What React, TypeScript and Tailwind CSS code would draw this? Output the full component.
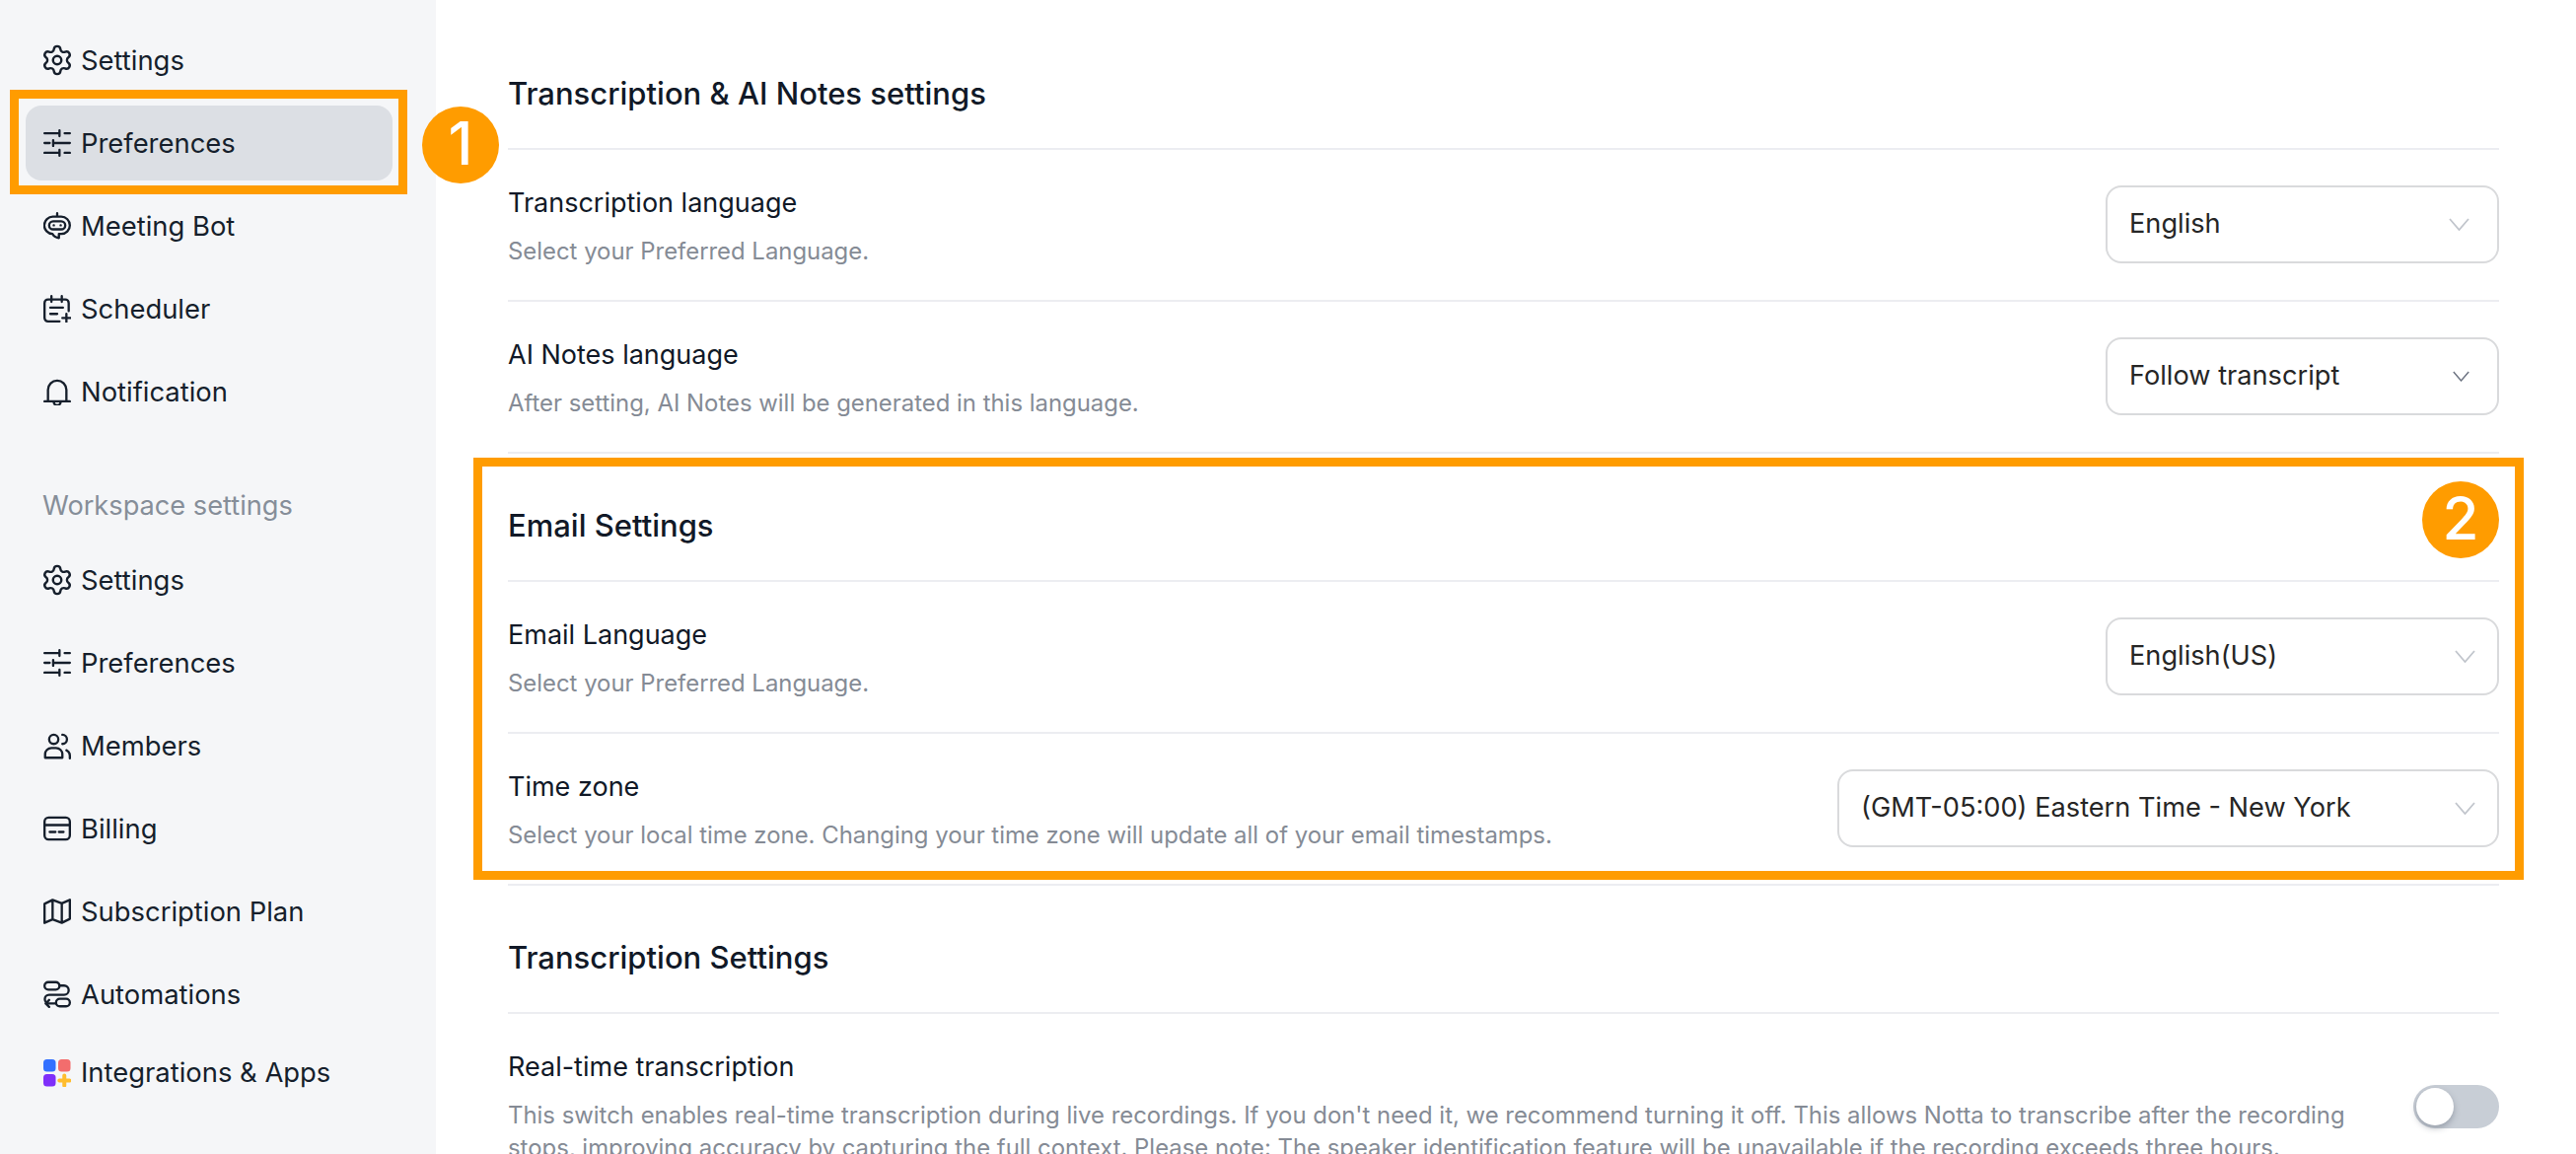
import type { ReactNode } from "react";
import { Settings } from "lucide-react";

function Icon({ children }: { children: ReactNode }) {
  return (
    <svg
      viewBox="0 0 24 24"
      className="h-[28px] w-[28px] shrink-0 text-[#161f2c]"
      fill="none"
      stroke="currentColor"
      strokeWidth="2"
      strokeLinecap="round"
      strokeLinejoin="round"
    >
      {children}
    </svg>
  );
}

const GearIcon = () => (
  <div className="flex h-[28px] w-[28px] shrink-0 items-center justify-center text-[#161f2c]">
    <Settings className="h-[34px] w-[34px] shrink-0" strokeWidth={1.7} />
  </div>
);

const SlidersIcon = () => (
  <Icon>
    <path d="M1 3.5h13M14 1v5M18.5 3.5H23M1 12h4.5M8.5 9.5v5M8.5 12H23M1 20.5h13M14 18v5M18.5 20.5H23" />
  </Icon>
);

const BotIcon = () => (
  <Icon>
    <path d="M12 1v3M8.5 4h7a7.5 7.5 0 0 1 0 15H13.5v3.5C11 22 9 21 8 19a7.5 7.5 0 0 1 .5-15z" />
    <rect x="5" y="8" width="14" height="7" rx="3.5" />
    <path d="M9 11.5h.1M15 11.5h.1" />
  </Icon>
);

const CalendarPlusIcon = () => (
  <Icon>
    <path d="M22 14V7a3 3 0 0 0-3-3H4a3 3 0 0 0-3 3v13a3 3 0 0 0 3 3h10M7 1v5M16 1v5M6 11h11M6 16.5h6M20 16.5v7M16.5 20h7" />
  </Icon>
);

const BellIcon = () => (
  <Icon>
    <path d="M4 20v-9.500a8 8 0 0 1 16 0V20M1 20.500h22M9 21a3 3 0 0 0 6 0" />
  </Icon>
);

const MembersIcon = () => (
  <Icon>
    <circle cx="9" cy="6.5" r="4" />
    <path d="M1.500 22.500v-3a5.500 5.500 0 0 1 5.500-5.500h4a5.500 5.500 0 0 1 5.500 5.500v3zM16.500 2.500a4 4 0 0 1 0 8M23 23v-2.500c0-2-1-3.500-3-4.500" />
  </Icon>
);

const CardIcon = () => (
  <Icon>
    <rect x="1" y="2.5" width="22" height="19" rx="3.5" />
    <path d="M1 9h22M5.500 15h5M13.500 15h4" />
  </Icon>
);

const MapIcon = () => (
  <Icon>
    <path d="M1 5.500 8 2l8 3 7-3v16.500L16 22l-8-3-7 3zM8 2v17M16 5v17" />
  </Icon>
);

const AutomationIcon = () => (
  <Icon>
    <rect x="1" y="1.5" width="13" height="6.5" rx="3.25" />
    <rect x="11" y="16" width="12" height="6.5" rx="3.25" />
    <path d="M14 4.500h4a4 4 0 0 1 0 8H5a3.750 3.750 0 0 0 0 7.500h5M5 17l-3 3 3 3" />
  </Icon>
);

const AppsIcon = () => (
  <svg viewBox="0 0 28 28" className="h-[28px] w-[28px] shrink-0">
    <rect x="0" y="0" width="12.5" height="12.5" rx="3.5" fill="#3370ff" />
    <rect x="15" y="0" width="12.5" height="12.5" rx="3.5" fill="#f36d6d" />
    <rect x="0" y="15" width="12.5" height="12.5" rx="3.5" fill="#7f2ffa" />
    <path d="M21.25 16.5v10M16.25 21.5h10" stroke="#ffbd2e" strokeWidth="4" strokeLinecap="round" />
  </svg>
);

function NavItem({ icon, label, active, tight }: { icon: ReactNode; label: string; active?: boolean; tight?: boolean }) {
  return (
    <div
      className={`mx-[26px] mb-2 flex h-[76px] w-[372px] items-center gap-[10px] rounded-[16px] px-[18px] text-[27.4px] text-[#161f2c] ${
        active ? "bg-[#dcdfe4]" : ""
      } ${tight ? "-mt-1" : ""}`}
    >
      {icon}
      <span className={tight ? "" : "pt-[2px]"}>{label}</span>
    </div>
  );
}

function Chevron({ className }: { className: string }) {
  return (
    <svg viewBox="0 0 21 13" className={className} fill="none" stroke="currentColor" strokeWidth="1.8">
      <path d="M1 1l9.5 11L20 1" />
    </svg>
  );
}

function SelectBox({ value, wide, kind }: { value: string; wide?: boolean; kind: "a" | "b" | "c" }) {
  return (
    <div
      className={`-mt-[3px] flex h-[79px] shrink-0 items-center justify-between rounded-[16px] border-2 border-[#d9dadc] bg-white pl-[22px] text-[27.2px] text-[#262626] ${
        wide ? "w-[671px]" : "w-[399px]"
      } ${kind === "a" ? "pr-[28px]" : kind === "b" ? "pr-[28px]" : "pr-[22px]"}`}
    >
      <span>{value}</span>
      {kind === "a" && <Chevron className="h-[13px] w-[21px] text-[#c1c5cc]" />}
      {kind === "b" && <Chevron className="h-[11px] w-[17px] text-[#6b7280]" />}
      {kind === "c" && <Chevron className="h-[13px] w-[21px] text-[#c1c5cc]" />}
    </div>
  );
}

function SectionTitle({ children }: { children: ReactNode }) {
  return (
    <div className="flex h-[130px] items-center border-b-2 border-[#ecedf1] pt-[18px] text-[31px] font-medium text-[#111927]">
      {children}
    </div>
  );
}

function Row({ label, desc, children }: { label: string; desc: ReactNode; children: ReactNode }) {
  return (
    <div className="flex items-center justify-between gap-[40px] border-b-2 border-[#ecedf1] pb-[33px] pt-[34px]">
      <div className="flex min-w-0 flex-1 flex-col">
        <div className="text-[27px] leading-[40px] text-[#111927]">{label}</div>
        <div className="mt-[12px] text-[23.9px] leading-[33px] text-[#858b95]">{desc}</div>
      </div>
      {children}
    </div>
  );
}

function Badge({ n, className }: { n: string; className: string }) {
  return (
    <div
      className={`absolute flex h-[78px] w-[78px] items-center justify-center rounded-full bg-[#ff9c00] pb-[4px] text-[60px] font-medium leading-none text-white ${className}`}
    >
      {n}
    </div>
  );
}

export default function App() {
  return (
    <div className="relative flex h-[1170px] w-[2612px] overflow-hidden bg-white font-['Inter','Liberation_Sans',sans-serif]">
      <aside className="h-full w-[442px] shrink-0 bg-[#f5f6f8] pt-[23px]">
        <NavItem icon={<GearIcon />} label="Settings" />
        <NavItem icon={<SlidersIcon />} label="Preferences" active />
        <NavItem icon={<BotIcon />} label="Meeting Bot" />
        <NavItem icon={<CalendarPlusIcon />} label="Scheduler" />
        <NavItem icon={<BellIcon />} label="Notification" />
        <div className="mb-[17px] ml-[43px] mt-[58px] text-[27.2px] leading-[40px] text-[#868e99]">Workspace settings</div>
        <NavItem icon={<GearIcon />} label="Settings" />
        <NavItem icon={<SlidersIcon />} label="Preferences" />
        <NavItem icon={<MembersIcon />} label="Members" />
        <NavItem icon={<CardIcon />} label="Billing" />
        <NavItem icon={<MapIcon />} label="Subscription Plan" />
        <NavItem icon={<AutomationIcon />} label="Automations" />
        <NavItem icon={<AppsIcon />} label="Integrations & Apps" tight />
      </aside>

      <main className="min-w-0 flex-1 pl-[73px] pr-[78px] pt-[22px]">
        <SectionTitle>Transcription &amp; AI Notes settings</SectionTitle>
        <Row label="Transcription language" desc="Select your Preferred Language.">
          <SelectBox value="English" kind="a" />
        </Row>
        <Row label="AI Notes language" desc="After setting, AI Notes will be generated in this language.">
          <SelectBox value="Follow transcript" kind="b" />
        </Row>
        <SectionTitle>Email Settings</SectionTitle>
        <Row label="Email Language" desc="Select your Preferred Language.">
          <SelectBox value="English(US)" kind="c" />
        </Row>
        <Row label="Time zone" desc="Select your local time zone. Changing your time zone will update all of your email timestamps.">
          <SelectBox value="(GMT-05:00) Eastern Time - New York" kind="c" wide />
        </Row>
        <SectionTitle>Transcription Settings</SectionTitle>
        <Row
          label="Real-time transcription"
          desc="This switch enables real-time transcription during live recordings. If you don't need it, we recommend turning it off. This allows Notta to transcribe after the recording stops, improving accuracy by capturing the full context. Please note: The speaker identification feature will be unavailable if the recording exceeds three hours."
        >
          <div className="mt-[2px] flex h-[44px] w-[87px] shrink-0 items-center rounded-full bg-[#c8ced6] pl-[3px]">
            <div className="h-[38px] w-[38px] rounded-full bg-white shadow-[0_3px_6px_rgba(60,70,85,0.35)]" />
          </div>
        </Row>
      </main>

      <div className="absolute left-[10px] top-[91px] h-[106px] w-[403px] border-[9px] border-[#ff9c00]" />
      <Badge n="1" className="left-[428px] top-[108px]" />
      <div className="absolute left-[480px] top-[464px] h-[428px] w-[2079px] border-[9px] border-[#ff9c00]" />
      <Badge n="2" className="left-[2456px] top-[488px]" />
    </div>
  );
}
